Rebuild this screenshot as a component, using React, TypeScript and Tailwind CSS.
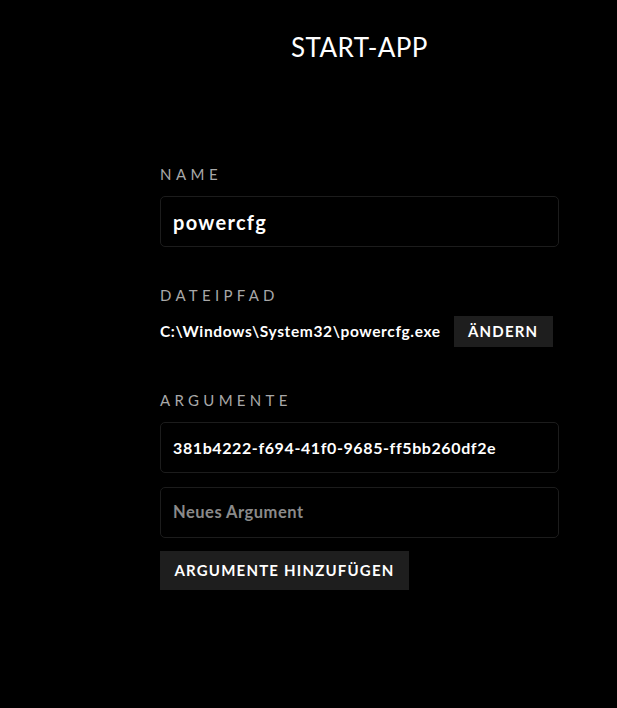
import React from "react";

const font = { fontFamily: "Lato, 'Open Sans', sans-serif" };

export default function App() {
  return (
    <div className="min-h-[708px] w-full bg-black text-white" style={font}>
      <div className="ml-[160px] w-[399px] flex flex-col">
        <h1 className="mt-[31px] h-[32px] text-center text-[26px] leading-[32px] font-normal text-white tracking-[0.4px]">
          START-APP
        </h1>

        <div className="mt-[101px] h-[20px] text-[15px] leading-[20px] tracking-[4.5px] text-[#a8a8a8] font-normal">
          NAME
        </div>
        <div className="mt-[12px] h-[51px] rounded-[5px] border border-[#1c1c1c] bg-black flex items-center px-[12px]">
          <span className="text-[20px] font-bold tracking-[1.3px] text-white">powercfg</span>
        </div>

        <div className="mt-[38px] h-[20px] text-[15px] leading-[20px] tracking-[4.3px] text-[#a8a8a8] font-normal">
          DATEIPFAD
        </div>
        <div className="mt-[11px] flex items-center">
          <span className="text-[15.5px] font-bold text-white tracking-[0.62px]">
            C:\Windows\System32\powercfg.exe
          </span>
          <button className="ml-[13px] h-[31px] w-[99px] bg-[#1e1e1e] text-[15px] font-bold tracking-[1.2px] text-white flex items-center justify-center">
            ÄNDERN
          </button>
        </div>

        <div className="mt-[43px] h-[20px] text-[15px] leading-[20px] tracking-[4.3px] text-[#a8a8a8] font-normal">
          ARGUMENTE
        </div>
        <div className="mt-[12px] h-[51px] rounded-[5px] border border-[#1c1c1c] bg-black flex items-center px-[12px]">
          <span className="text-[16px] font-bold tracking-[0.6px] text-white">
            381b4222-f694-41f0-9685-ff5bb260df2e
          </span>
        </div>
        <div className="mt-[14px] h-[51px] rounded-[5px] border border-[#1c1c1c] bg-black flex items-center px-[12px]">
          <span className="text-[16.5px] font-bold tracking-[0.5px] text-[#8a8a8a]">Neues Argument</span>
        </div>
        <button className="mt-[13px] h-[39px] w-[249px] bg-[#1e1e1e] text-[15px] font-bold tracking-[1.2px] text-white flex items-center justify-center">
          ARGUMENTE HINZUFÜGEN
        </button>
      </div>
    </div>
  );
}
